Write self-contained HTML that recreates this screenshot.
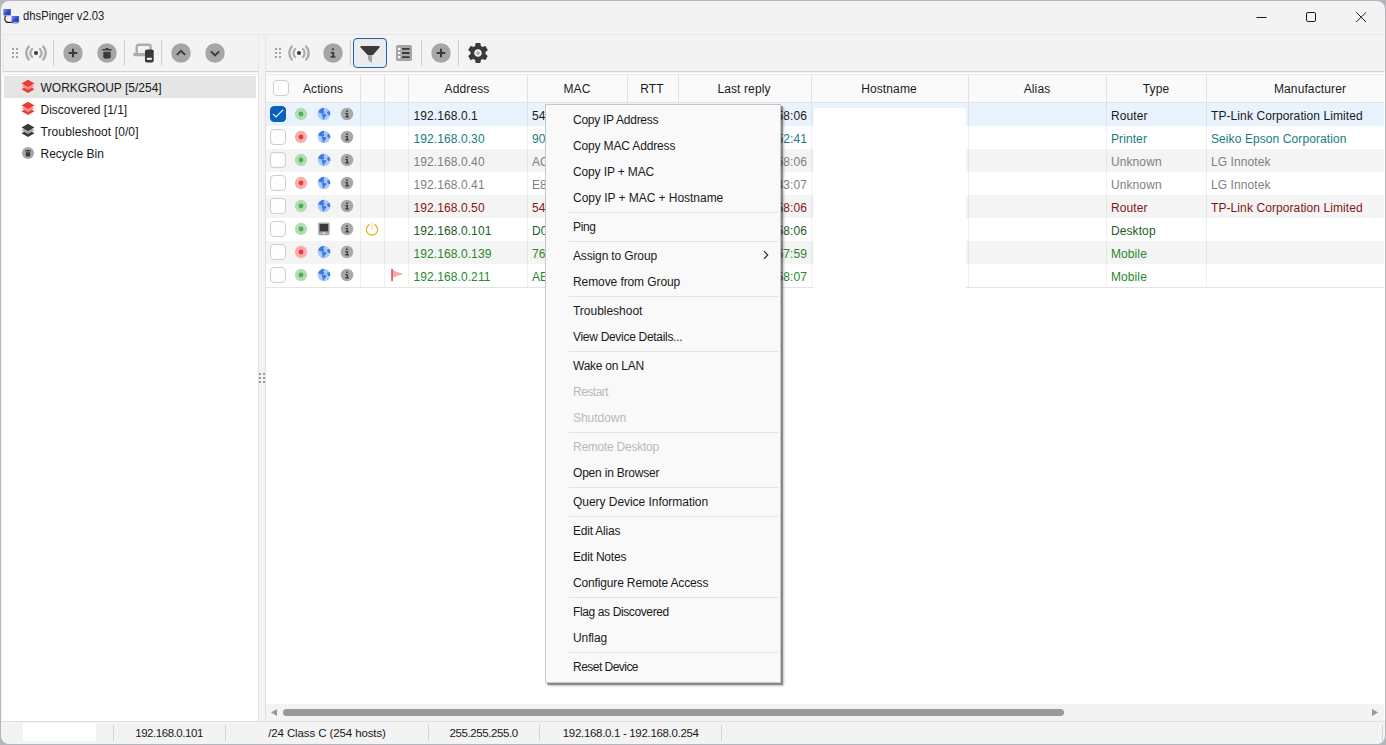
<!DOCTYPE html>
<html><head><meta charset="utf-8"><title>dhsPinger v2.03</title>
<style>
*{box-sizing:border-box;margin:0;padding:0}
html,body{width:1386px;height:745px;overflow:hidden;background:#b4b7bb}
body{font-family:"Liberation Sans",sans-serif;font-size:12px;color:#1a1a1a;position:relative}
i,b{font-style:normal;font-weight:normal;display:block}
#win{position:absolute;left:1px;top:1px;width:1384px;height:743px;background:#f3f3f3;border-radius:8px;overflow:hidden}
#title{position:absolute;left:21.600px;top:7px;font-size:12.500px;line-height:16px;color:#1a1a1a;white-space:nowrap;transform-origin:0 0;transform:scaleX(0.9000)}
.hl{position:absolute;height:1px;background:#e2e2e2}
.vl{position:absolute;width:1px;background:#d0d0d0}
.tb{position:absolute}
#tree{position:absolute;left:1px;top:72px;width:257px;height:648px;background:#fff;border-right:1px solid #e0e0e0}
.ti{position:absolute;left:2px;width:252px;height:22px;line-height:24px;padding-left:36.500px;font-size:12px;white-space:nowrap}
.ti.sel{background:#e5e5e5}
.ti svg{position:absolute;left:17px;top:4px}
#grid{position:absolute;left:264px;top:72px;width:1120px;height:648px;background:#fff}
#grid:before{content:'';position:absolute;left:0;top:0;width:1px;height:648px;background:#e0e0e0;z-index:3}
#hdr{position:absolute;left:0;top:1px;width:1119px;height:29px;background:#fafafa;border-bottom:1px solid #e4e4e4;border-top:1px solid #ebebeb}
.hs{position:absolute;top:0;width:1px;height:27px;background:#e2e2e2}
.hc{position:absolute;top:0;width:120px;height:27px;line-height:29px;text-align:center;white-space:nowrap;letter-spacing:.12px}
.row{position:absolute;left:0;width:1119px;height:23px;line-height:27px;white-space:nowrap;letter-spacing:.09px}
.row.alt{background:#f4f4f4}
.row.sel{background:#e8f3fd}
.row span{position:absolute;top:0}
.rs{position:absolute;top:0;width:1px;height:23px;background:rgba(0,0,0,.06)}
.ic{position:absolute;top:3.900px}
.cb{position:absolute;width:16px;height:16px;border:1px solid #cdcdcd;border-radius:4px;background:#fefefe}
.cb.on{background:#0860be;border-color:#0860be}
.cb svg{position:absolute;left:-1px;top:-1px}
.c-teal{color:#187c84}.c-gray{color:#7f7f7f}.c-red{color:#84161a}.c-dg{color:#1b601f}.c-g{color:#26882a}
#redact{position:absolute;left:549px;top:35px;width:152px;height:180px;background:#fff}
#menu{position:absolute;left:544px;top:103px;width:236px;height:579px;background:#f9f9f9;border:1px solid #c6c6c6;box-shadow:2px 2px 0 rgba(0,0,0,.3),3px 3px 2px rgba(0,0,0,.24);font-size:12px}
.mi{position:absolute;left:27px;width:190px;height:26px;line-height:26px;white-space:nowrap;color:#1a1a1a}
.mi.dis{color:#b9b9b9}
.mi .arr{position:absolute;left:189px;top:7px}
.ms{position:absolute;left:23px;width:209px;height:1px;background:#e1e1e1}
#status{position:absolute;left:0;top:720px;width:1384px;height:23px;font-size:11.500px;line-height:23px;border-top:1px solid #e0e0e0}
#status span{position:absolute;top:0;white-space:nowrap}
#status i{position:absolute;top:3px;width:1px;height:16px;background:#d4d4d4}
</style></head><body>
<div id="win">
<!-- title bar -->
<svg class="tb" style="left:2px;top:7px" width="18" height="18" viewBox="0 0 18 18">
<defs><linearGradient id="mg" x1="0" y1="0" x2="1" y2="1"><stop offset="0" stop-color="#7f9df5"/><stop offset=".45" stop-color="#2f4fe0"/><stop offset="1" stop-color="#1f2fc8"/></linearGradient></defs>
<path d="M3.200 7.500C1.300 8.800 1.100 12.900 3.700 14.100C4.600 14.500 7 14.500 10 14.500" fill="none" stroke="#1a1a1a" stroke-width="1.200"/>
<rect x="0.400" y="1" width="7.500" height="6.500" fill="#5a68b4"/><rect x="1.100" y="1.600" width="6.100" height="5.100" fill="url(#mg)"/><rect x="1.600" y="7.500" width="4.800" height=".9" fill="#a9b0c8"/>
<rect x="8.600" y="8" width="7.500" height="6.600" fill="#5a68b4"/><rect x="9.300" y="8.600" width="6.100" height="5.200" fill="url(#mg)"/><rect x="9.800" y="14.600" width="5" height="1.300" fill="#a9b0c8"/>
</svg>
<div id="title">dhsPinger v2.03</div>
<svg class="tb" style="left:1250px;top:5px" width="130" height="22" viewBox="0 0 130 22">
<path d="M5.5 11.5h10" stroke="#1a1a1a" stroke-width="1" fill="none"/>
<rect x="55.5" y="6.5" width="9" height="9" rx="1.3" fill="none" stroke="#1a1a1a" stroke-width="1"/>
<path d="M105.300 6.300l9.700 9.700M115 6.300l-9.700 9.700" stroke="#1a1a1a" stroke-width="1" fill="none"/>
</svg>
<!-- toolbars -->
<div class="hl" style="left:2px;top:33px;width:1381px;background:#e7e7e7"></div>
<div class="hl" style="left:2px;top:70px;width:256px;background:#d4d4d4"></div>
<div class="hl" style="left:264px;top:70px;width:1119px;background:#d4d4d4"></div>
<div class="vl" style="left:2px;top:34px;height:36px;background:#e9e9e9"></div>
<div class="vl" style="left:264px;top:34px;height:36px;background:#e6e6e6"></div>
<div class="vl" style="left:257px;top:34px;height:36px;background:#e9e9e9"></div>
<svg class="tb" style="left:10px;top:46px" width="8" height="12"><g fill="#a3a3a3"><rect x="1" y="1" width="2" height="2"/><rect x="5" y="1" width="2" height="2"/><rect x="1" y="5" width="2" height="2"/><rect x="5" y="5" width="2" height="2"/><rect x="1" y="9" width="2" height="2"/><rect x="5" y="9" width="2" height="2"/></g></svg>
<svg class="tb" style="left:22px;top:39px" width="26" height="26"><use href="#i-sens"/></svg>
<div class="vl" style="left:52px;top:39px;height:26px"></div>
<svg class="tb" style="left:62px;top:42px" width="20" height="20"><use href="#i-add"/></svg>
<svg class="tb" style="left:96px;top:42px" width="20" height="20"><use href="#i-del"/></svg>
<div class="vl" style="left:123px;top:39px;height:26px"></div>
<svg class="tb" style="left:131px;top:41px" width="23" height="22" viewBox="0 0 23 22">
<path d="M4.750 11.500V4.400c0-.9.700-1.650 1.650-1.650H16.900c.9 0 1.650.7 1.650 1.650V8" fill="none" stroke="#ababab" stroke-width="2.400"/><path d="M1.300 10.900h12.300v3.300H2.700c-.8 0-1.400-.6-1.400-1.400z" fill="#ababab"/>
<rect x="13" y="7.400" width="8.700" height="13" rx="1.900" fill="#3a3a3a"/><rect x="14.900" y="15.800" width="4.900" height="2" fill="#fff"/></svg>
<div class="vl" style="left:160px;top:39px;height:26px"></div>
<svg class="tb" style="left:170px;top:42px" width="20" height="20"><use href="#i-up"/></svg>
<svg class="tb" style="left:204px;top:42px" width="20" height="20"><use href="#i-down"/></svg>
<!-- right toolbar -->
<svg class="tb" style="left:273px;top:46px" width="8" height="12"><g fill="#a3a3a3"><rect x="1" y="1" width="2" height="2"/><rect x="5" y="1" width="2" height="2"/><rect x="1" y="5" width="2" height="2"/><rect x="5" y="5" width="2" height="2"/><rect x="1" y="9" width="2" height="2"/><rect x="5" y="9" width="2" height="2"/></g></svg>
<svg class="tb" style="left:285px;top:39px" width="26" height="26"><use href="#i-sens"/></svg>
<svg class="tb" style="left:322px;top:42px" width="20" height="20"><use href="#i-infob"/></svg>
<div class="vl" style="left:349px;top:39px;height:26px"></div>
<div class="tb" style="left:352px;top:37px;width:34px;height:30px;border:1px solid #26609b;border-radius:4px;background:#ebebeb;box-shadow:inset 0 0 0 1px #dceefa"></div>
<svg class="tb" style="left:358px;top:43px" width="22" height="20" viewBox="0 0 22 20"><path d="M9 10.500h4v8.200l-2.100-1.200c-1.100-.7-1.900-1.700-1.900-3z" fill="#a3a3a3"/><path d="M2.400 2h17.300c.9 0 1.300.9.800 1.500L14 10.900H8.600L1.600 3.500C1.100 2.900 1.500 2 2.400 2z" fill="#3a3a3a"/></svg>
<svg class="tb" style="left:395px;top:44px" width="16" height="16" viewBox="0 0 16 16"><rect width="16" height="16" rx="1.700" fill="#a5a5a5"/><g fill="#fff"><rect x="2" y="2.800" width="2.300" height="2.200" rx=".6"/><rect x="2" y="6.900" width="2.300" height="2.200" rx=".6"/><rect x="2" y="11" width="2.300" height="2.200" rx=".6"/></g><g fill="#3a3a3a"><rect x="6" y="3" width="7.700" height="1.800" rx=".5"/><rect x="6" y="7.100" width="7.700" height="1.800" rx=".5"/><rect x="6" y="11.200" width="7.700" height="1.800" rx=".5"/></g></svg>
<div class="vl" style="left:420px;top:39px;height:26px"></div>
<svg class="tb" style="left:430px;top:42px" width="20" height="20"><use href="#i-add"/></svg>
<div class="vl" style="left:457px;top:39px;height:26px"></div>
<svg class="tb" style="left:464px;top:39px" width="26" height="26"><use href="#i-gear"/></svg>
<!-- tree -->
<div id="tree">
<div class="hl" style="left:0;top:1px;width:256px;background:#ededed"></div>
<div class="ti sel" style="top:3px"><svg width="14" height="15" style="top:2.800px"><use href="#i-layr"/></svg>WORKGROUP [5/254]</div>
<div class="ti" style="top:25px"><svg width="14" height="15" style="top:2.800px"><use href="#i-layr"/></svg>Discovered [1/1]</div>
<div class="ti" style="top:47px"><svg width="14" height="15" style="top:2.800px"><use href="#i-layk"/></svg><span style="letter-spacing:.1px">Troubleshoot [0/0]</span></div>
<div class="ti" style="top:69px"><svg width="14" height="14"><use href="#i-bin"/></svg>Recycle Bin</div>
</div>
<svg class="tb" style="left:258px;top:372px" width="6" height="10"><g fill="#9c9c9c"><rect x="0" y="0" width="2" height="2"/><rect x="4" y="0" width="2" height="2"/><rect x="0" y="4" width="2" height="2"/><rect x="4" y="4" width="2" height="2"/><rect x="0" y="8" width="2" height="2"/><rect x="4" y="8" width="2" height="2"/></g></svg>
<div id="grid">
<div id="hdr">
<i class="hs" style="left:95px"></i><i class="hs" style="left:119px"></i><i class="hs" style="left:143px"></i><i class="hs" style="left:262px"></i><i class="hs" style="left:362px"></i><i class="hs" style="left:413px"></i><i class="hs" style="left:546px"></i><i class="hs" style="left:703px"></i><i class="hs" style="left:841px"></i><i class="hs" style="left:941px"></i>
<b class="cb" style="left:8px;top:5px"></b>
<span class="hc" style="left:-2px">Actions</span><span class="hc" style="left:142px">Address</span><span class="hc" style="left:252px">MAC</span><span class="hc" style="left:327px">RTT</span><span class="hc" style="left:419px">Last reply</span><span class="hc" style="left:564px">Hostname</span><span class="hc" style="left:712px">Alias</span><span class="hc" style="left:831px">Type</span><span class="hc" style="left:985px">Manufacturer</span>
</div>
<div class="row sel " style="top:30px"><i class="rs" style="left:95px"></i><i class="rs" style="left:119px"></i><i class="rs" style="left:143px"></i><i class="rs" style="left:262px"></i><i class="rs" style="left:362px"></i><i class="rs" style="left:413px"></i><i class="rs" style="left:546px"></i><i class="rs" style="left:703px"></i><i class="rs" style="left:841px"></i><i class="rs" style="left:941px"></i><b class="cb on" style="left:5px;top:3px"><svg width="16" height="16" viewBox="0 0 16 16"><path d="M3.300 8.300L6 10.900 12.800 4.100" fill="none" stroke="#fff" stroke-width="1.150" stroke-linecap="round" stroke-linejoin="round"/></svg></b><svg class="ic" style="left:29px" width="14" height="14"><use href="#i-dotg"/></svg><svg class="ic" style="left:52.200px" width="14" height="14"><use href="#i-globe"/></svg><svg class="ic" style="left:75px" width="14" height="14"><use href="#i-info"/></svg><span style="left:148.500px">192.168.0.1</span><span style="left:267px">54:AF:97:2C:1B:08</span><span style="left:367px">1 ms</span><span style="right:577px">14/03/2025 10:58:06</span><span style="left:846px">Router</span><span style="left:946px">TP-Link Corporation Limited</span></div>
<div class="row c-teal" style="top:53px"><i class="rs" style="left:95px"></i><i class="rs" style="left:119px"></i><i class="rs" style="left:143px"></i><i class="rs" style="left:262px"></i><i class="rs" style="left:362px"></i><i class="rs" style="left:413px"></i><i class="rs" style="left:546px"></i><i class="rs" style="left:703px"></i><i class="rs" style="left:841px"></i><i class="rs" style="left:941px"></i><b class="cb" style="left:5px;top:3px"></b><svg class="ic" style="left:29px" width="14" height="14"><use href="#i-dotr"/></svg><svg class="ic" style="left:52.200px" width="14" height="14"><use href="#i-globe"/></svg><svg class="ic" style="left:75px" width="14" height="14"><use href="#i-info"/></svg><span style="left:148.500px">192.168.0.30</span><span style="left:267px">90:2B:34:7D:11:C5</span><span style="left:367px"></span><span style="right:577px">14/03/2025 10:52:41</span><span style="left:846px">Printer</span><span style="left:946px">Seiko Epson Corporation</span></div>
<div class="row alt c-gray" style="top:76px"><i class="rs" style="left:95px"></i><i class="rs" style="left:119px"></i><i class="rs" style="left:143px"></i><i class="rs" style="left:262px"></i><i class="rs" style="left:362px"></i><i class="rs" style="left:413px"></i><i class="rs" style="left:546px"></i><i class="rs" style="left:703px"></i><i class="rs" style="left:841px"></i><i class="rs" style="left:941px"></i><b class="cb" style="left:5px;top:3px"></b><svg class="ic" style="left:29px" width="14" height="14"><use href="#i-dotg"/></svg><svg class="ic" style="left:52.200px" width="14" height="14"><use href="#i-globe"/></svg><svg class="ic" style="left:75px" width="14" height="14"><use href="#i-info"/></svg><span style="left:148.500px">192.168.0.40</span><span style="left:267px">AC:0D:1B:66:3E:92</span><span style="left:367px">2 ms</span><span style="right:577px">14/03/2025 10:58:06</span><span style="left:846px">Unknown</span><span style="left:946px">LG Innotek</span></div>
<div class="row c-gray" style="top:99px"><i class="rs" style="left:95px"></i><i class="rs" style="left:119px"></i><i class="rs" style="left:143px"></i><i class="rs" style="left:262px"></i><i class="rs" style="left:362px"></i><i class="rs" style="left:413px"></i><i class="rs" style="left:546px"></i><i class="rs" style="left:703px"></i><i class="rs" style="left:841px"></i><i class="rs" style="left:941px"></i><b class="cb" style="left:5px;top:3px"></b><svg class="ic" style="left:29px" width="14" height="14"><use href="#i-dotr"/></svg><svg class="ic" style="left:52.200px" width="14" height="14"><use href="#i-globe"/></svg><svg class="ic" style="left:75px" width="14" height="14"><use href="#i-info"/></svg><span style="left:148.500px">192.168.0.41</span><span style="left:267px">E8:F2:E2:A4:90:1D</span><span style="left:367px"></span><span style="right:577px">14/03/2025 10:43:07</span><span style="left:846px">Unknown</span><span style="left:946px">LG Innotek</span></div>
<div class="row alt c-red" style="top:122px"><i class="rs" style="left:95px"></i><i class="rs" style="left:119px"></i><i class="rs" style="left:143px"></i><i class="rs" style="left:262px"></i><i class="rs" style="left:362px"></i><i class="rs" style="left:413px"></i><i class="rs" style="left:546px"></i><i class="rs" style="left:703px"></i><i class="rs" style="left:841px"></i><i class="rs" style="left:941px"></i><b class="cb" style="left:5px;top:3px"></b><svg class="ic" style="left:29px" width="14" height="14"><use href="#i-dotg"/></svg><svg class="ic" style="left:52.200px" width="14" height="14"><use href="#i-globe"/></svg><svg class="ic" style="left:75px" width="14" height="14"><use href="#i-info"/></svg><span style="left:148.500px">192.168.0.50</span><span style="left:267px">54:AF:97:2C:4A:E1</span><span style="left:367px">1 ms</span><span style="right:577px">14/03/2025 10:58:06</span><span style="left:846px">Router</span><span style="left:946px">TP-Link Corporation Limited</span></div>
<div class="row c-dg" style="top:145px"><i class="rs" style="left:95px"></i><i class="rs" style="left:119px"></i><i class="rs" style="left:143px"></i><i class="rs" style="left:262px"></i><i class="rs" style="left:362px"></i><i class="rs" style="left:413px"></i><i class="rs" style="left:546px"></i><i class="rs" style="left:703px"></i><i class="rs" style="left:841px"></i><i class="rs" style="left:941px"></i><b class="cb" style="left:5px;top:3px"></b><svg class="ic" style="left:29px" width="14" height="14"><use href="#i-dotg"/></svg><svg class="ic s" style="left:52px" width="14" height="14"><use href="#i-pc"/></svg><svg class="ic" style="left:75px" width="14" height="14"><use href="#i-info"/></svg><svg class="ic s" style="left:100px" width="14" height="14"><use href="#i-power"/></svg><span style="left:148.500px">192.168.0.101</span><span style="left:267px">D0:50:99:8A:C2:37</span><span style="left:367px">0 ms</span><span style="right:577px">14/03/2025 10:58:06</span><span style="left:846px">Desktop</span></div>
<div class="row alt c-g" style="top:168px"><i class="rs" style="left:95px"></i><i class="rs" style="left:119px"></i><i class="rs" style="left:143px"></i><i class="rs" style="left:262px"></i><i class="rs" style="left:362px"></i><i class="rs" style="left:413px"></i><i class="rs" style="left:546px"></i><i class="rs" style="left:703px"></i><i class="rs" style="left:841px"></i><i class="rs" style="left:941px"></i><b class="cb" style="left:5px;top:3px"></b><svg class="ic" style="left:29px" width="14" height="14"><use href="#i-dotr"/></svg><svg class="ic" style="left:52.200px" width="14" height="14"><use href="#i-globe"/></svg><svg class="ic" style="left:75px" width="14" height="14"><use href="#i-info"/></svg><span style="left:148.500px">192.168.0.139</span><span style="left:267px">76:3B:D1:0F:5A:6C</span><span style="left:367px"></span><span style="right:577px">14/03/2025 10:57:59</span><span style="left:846px">Mobile</span></div>
<div class="row c-g" style="top:191px"><i class="rs" style="left:95px"></i><i class="rs" style="left:119px"></i><i class="rs" style="left:143px"></i><i class="rs" style="left:262px"></i><i class="rs" style="left:362px"></i><i class="rs" style="left:413px"></i><i class="rs" style="left:546px"></i><i class="rs" style="left:703px"></i><i class="rs" style="left:841px"></i><i class="rs" style="left:941px"></i><b class="cb" style="left:5px;top:3px"></b><svg class="ic" style="left:29px" width="14" height="14"><use href="#i-dotg"/></svg><svg class="ic" style="left:52.200px" width="14" height="14"><use href="#i-globe"/></svg><svg class="ic" style="left:75px" width="14" height="14"><use href="#i-info"/></svg><svg class="ic s" style="left:125px" width="14" height="14"><use href="#i-flag"/></svg><span style="left:148.500px">192.168.0.211</span><span style="left:267px">AE:19:42:B7:E0:53</span><span style="left:367px">5 ms</span><span style="right:577px">14/03/2025 10:58:07</span><span style="left:846px">Mobile</span></div>
<div class="hl" style="left:0;top:214px;width:1119px;background:#e4e4e4"></div>
<div id="redact"></div>
<div style="position:absolute;left:0;top:631px;width:1119px;height:17px;background:#f3f3f3">
<svg style="position:absolute;left:6px;top:5px" width="8" height="8"><path d="M6 0v7L0 3.500z" fill="#979797"/></svg>
<b style="position:absolute;left:18px;top:5px;width:781px;height:7px;border-radius:3.500px;background:#999"></b>
<svg style="position:absolute;left:1107px;top:5px" width="8" height="8"><path d="M0 0v7l6-3.500z" fill="#979797"/></svg>
</div>
</div>
<!-- status -->
<div id="status">
<b style="position:absolute;left:22px;top:1px;width:73px;height:18px;background:#fff"></b>
<i style="left:112px"></i><i style="left:224px"></i><i style="left:427px"></i><i style="left:538px"></i><i style="left:720px"></i><i style="left:1381px"></i>
<span style="left:134.2px;letter-spacing:-0.45px">192.168.0.101</span>
<span style="left:267.2px;letter-spacing:-0.11px">/24 Class C (254 hosts)</span>
<span style="left:448.4px;letter-spacing:-0.39px">255.255.255.0</span>
<span style="left:561.8px;letter-spacing:-0.32px">192.168.0.1 - 192.168.0.254</span>
</div>
<div id="menu">
<div class="mi" style="top:2px;letter-spacing:-0.26px">Copy IP Address</div>
<div class="mi" style="top:28px;letter-spacing:-0.15px">Copy MAC Address</div>
<div class="mi" style="top:54px;letter-spacing:-0.13px">Copy IP + MAC</div>
<div class="mi" style="top:80px;letter-spacing:-0.04px">Copy IP + MAC + Hostname</div>
<i class="ms" style="top:107px"></i>
<div class="mi" style="top:109px;letter-spacing:-0.37px">Ping</div>
<i class="ms" style="top:136px"></i>
<div class="mi" style="top:138px;letter-spacing:-0.14px">Assign to Group<svg class="arr" width="8" height="10" viewBox="0 0 8 10"><path d="M2 1.2 L5.8 5 L2 8.8" fill="none" stroke="#222" stroke-width="1.1"/></svg></div>
<div class="mi" style="top:164px;letter-spacing:-0.09px">Remove from Group</div>
<i class="ms" style="top:191px"></i>
<div class="mi" style="top:193px;letter-spacing:-0.02px">Troubleshoot</div>
<div class="mi" style="top:219px;letter-spacing:-0.30px">View Device Details...</div>
<i class="ms" style="top:246px"></i>
<div class="mi" style="top:248px;letter-spacing:-0.25px">Wake on LAN</div>
<div class="mi dis" style="top:274px;letter-spacing:-0.51px">Restart</div>
<div class="mi dis" style="top:300px;letter-spacing:-0.04px">Shutdown</div>
<i class="ms" style="top:327px"></i>
<div class="mi dis" style="top:329px;letter-spacing:-0.25px">Remote Desktop</div>
<div class="mi" style="top:355px;letter-spacing:-0.20px">Open in Browser</div>
<i class="ms" style="top:382px"></i>
<div class="mi" style="top:384px;letter-spacing:-0.04px">Query Device Information</div>
<i class="ms" style="top:411px"></i>
<div class="mi" style="top:413px;letter-spacing:-0.21px">Edit Alias</div>
<div class="mi" style="top:439px;letter-spacing:-0.22px">Edit Notes</div>
<div class="mi" style="top:465px;letter-spacing:-0.15px">Configure Remote Access</div>
<i class="ms" style="top:492px"></i>
<div class="mi" style="top:494px;letter-spacing:-0.38px">Flag as Discovered</div>
<div class="mi" style="top:520px;letter-spacing:-0.10px">Unflag</div>
<i class="ms" style="top:547px"></i>
<div class="mi" style="top:549px;letter-spacing:-0.53px">Reset Device</div>
</div>
</div>
<svg width="0" height="0" style="position:absolute;left:-10px;top:-10px"><defs>
<symbol id="i-dotg" viewBox="0 0 14 14"><circle cx="7" cy="7" r="6.150" fill="#b3dcb4"/><circle cx="7" cy="7" r="2.450" fill="#4caf50"/></symbol>
<symbol id="i-dotr" viewBox="0 0 14 14"><circle cx="7" cy="7" r="6.150" fill="#f6adac"/><circle cx="7" cy="7" r="2.450" fill="#ea3b3b"/></symbol>
<symbol id="i-globe" viewBox="0 0 14 14"><circle cx="7" cy="7" r="6.250" fill="#a9c8fa"/><g fill="#3b7be6"><path d="M1.100 5.600C1.400 3.800 2.600 2.200 4.300 1.400C5 1 5.800.800 6.600.800C7.200 1.400 7.100 2.300 6.700 3C6.300 3.700 6.700 4.300 7.300 4.900C7.400 5.700 6.500 6.600 5.600 6.700C4.700 6.700 3.900 6.600 3.300 6.100C2.600 5.500 1.800 5.300 1.100 5.600Z"/><path d="M4.900 7.300C5.700 6.900 6.800 6.900 7.700 7.100C8.500 7.200 9.200 7.500 9.400 8C9.300 8.900 8.700 9.500 8 10C7.300 10.500 7.100 11.300 6.900 12.200C6.700 12.700 6.100 12.500 5.900 12C5.600 11.300 5.800 10.400 5.600 9.700C5.300 9 4.500 8.300 4.900 7.300Z"/><path d="M10.300 4.700C10.900 4.200 11.600 3.900 12.300 4C12.900 4.900 13.250 5.900 13.250 7C13.250 7.300 13.200 7.600 13.150 7.900C12.500 8.200 11.700 8.100 11.100 7.500C10.500 6.900 9.900 5.700 10.300 4.700Z"/></g></symbol>
<symbol id="i-info" viewBox="0 0 14 14"><circle cx="7" cy="7" r="6.250" fill="#a8a8a8"/><path fill="#3a3a3a" d="M6.100 3.400h1.700v1.500H6.100zM5.300 5.900h2.600v3.400h1v1.100H5.200V9.300h1.300V7H5.300z"/></symbol>
<symbol id="i-pc" viewBox="0 0 14 14"><rect x="1.2" y="0.6" width="11.4" height="12.6" rx="1.4" fill="#a8a8a8"/><rect x="2.6" y="2" width="8.6" height="7.4" fill="#3c3c3c"/><rect x="5.9" y="10.6" width="2.2" height="1.1" fill="#fff"/></symbol>
<symbol id="i-power" viewBox="0 0 14 14"><path d="M4.3 2.6A5.6 5.6 0 1 0 9.7 2.6" fill="none" stroke="#e4b322" stroke-width="1.25" stroke-linecap="round"/><path d="M7 0.2v7.2" stroke="#f3dcc2" stroke-width="1.3" fill="none"/></symbol>
<symbol id="i-flag" viewBox="0 0 14 14"><path d="M2.700 2.300L13.200 5.900 2.700 9.500z" fill="#f5a8a8"/><rect x="1.2" y="0.9" width="1.7" height="12.3" fill="#cf5a5c"/></symbol>
<symbol id="i-layr" viewBox="0 0 14 15"><path d="M7 6.60L13.500 10.30 7 14.00 0.500 10.30z" fill="#ee3a35"/><path d="M7 3.65L13.500 7.35 7 11.05 0.500 7.35z" fill="#f5938f"/><path d="M7 0.70L13.500 4.40 7 8.10 0.500 4.40z" fill="#ee3a35"/></symbol>
<symbol id="i-layk" viewBox="0 0 14 15"><path d="M7 6.60L13.500 10.30 7 14.00 0.500 10.30z" fill="#3a3a3a"/><path d="M7 3.65L13.500 7.35 7 11.05 0.500 7.35z" fill="#a9a9a9"/><path d="M7 0.70L13.500 4.40 7 8.10 0.500 4.40z" fill="#3a3a3a"/></symbol>
<symbol id="i-bin" viewBox="0 0 14 14"><circle cx="7" cy="7" r="6.100" fill="#a8a8a8"/><path fill="#3a3a3a" d="M4.700 6.200h4.600v3.300c0 .5-.4.900-.9.900H5.600c-.5 0-.9-.4-.9-.900zM4.100 4.300h1.900l.4-.6h1.200l.4.600h1.900v1.200H4.100z"/></symbol>
<symbol id="i-sens" viewBox="0 0 26 26"><g fill="none" stroke="#acacac" stroke-linecap="round"><path stroke-width="2.450" d="M5.79 6.51A9.70 9.70 0 0 0 5.79 19.49M20.21 6.51A9.70 9.70 0 0 1 20.21 19.49"/><path stroke-width="2.300" d="M9.11 8.97A5.60 5.60 0 0 0 9.11 17.03M16.89 8.97A5.60 5.60 0 0 1 16.89 17.03"/></g><circle cx="13" cy="13" r="2.050" fill="#3a3a3a"/></symbol>
<symbol id="i-add" viewBox="0 0 20 20"><circle cx="10" cy="10" r="9.750" fill="#a6a6a6"/><path fill="#3a3a3a" d="M9 5.700h2V9h3.300v2H11v3.300H9V11H5.700V9H9z"/></symbol>
<symbol id="i-del" viewBox="0 0 20 20"><circle cx="10" cy="10" r="9.750" fill="#a6a6a6"/><path fill="#3a3a3a" d="M6.300 8.700h7.400v5.300c0 .8-.6 1.400-1.400 1.400H7.700c-.8 0-1.400-.6-1.400-1.400zM5.400 5.900h2.800l.7-.9h2.200l.7.900h2.800v1.700H5.400z"/></symbol>
<symbol id="i-up" viewBox="0 0 20 20"><circle cx="10" cy="10" r="9.750" fill="#a6a6a6"/><path d="M5.900 11.900L10 7.800l4.100 4.100" fill="none" stroke="#3a3a3a" stroke-width="1.900"/></symbol>
<symbol id="i-down" viewBox="0 0 20 20"><circle cx="10" cy="10" r="9.750" fill="#a6a6a6"/><path d="M5.900 8.400L10 12.500l4.100-4.100" fill="none" stroke="#3a3a3a" stroke-width="1.900"/></symbol>
<symbol id="i-infob" viewBox="0 0 20 20"><circle cx="10" cy="10" r="9.750" fill="#a6a6a6"/><circle cx="9.900" cy="6.300" r="1.150" fill="#3a3a3a"/><path fill="#3a3a3a" d="M7.700 9.100h3.500v4.100h1.200v1.600H7.400v-1.600h2V10.600H7.700z"/></symbol>
<symbol id="i-gear" viewBox="-0.480 -0.480 24.960 24.960"><circle cx="12" cy="12" r="4.200" fill="#f6f6f6"/><circle cx="12" cy="12" r="1.800" fill="#a9a9a9"/><path fill="#3a3a3a" d="M19.140 12.940c.04-.3.06-.61.060-.94 0-.32-.02-.64-.07-.94l2.030-1.580c.18-.14.23-.41.120-.61l-1.920-3.320c-.12-.22-.37-.29-.59-.22l-2.390.96c-.5-.38-1.030-.7-1.620-.94l-.36-2.540c-.04-.24-.24-.41-.48-.41h-3.840c-.24 0-.43.170-.47.410l-.36 2.540c-.59.240-1.130.570-1.620.940l-2.390-.96c-.22-.08-.47 0-.59.220L2.740 8.870c-.12.210-.08.470.12.610l2.030 1.580c-.05.300-.09.630-.09.940s.02.640.07.940l-2.030 1.580c-.18.140-.23.410-.12.610l1.920 3.320c.12.220.37.290.59.220l2.390-.96c.5.380 1.030.700 1.620.940l.36 2.540c.05.240.24.410.48.410h3.840c.24 0 .44-.17.470-.41l.36-2.540c.59-.24 1.130-.56 1.620-.94l2.390.96c.22.080.47 0 .59-.22l1.920-3.320c.12-.22.070-.47-.12-.61l-2.010-1.580zM12 15.600c-1.980 0-3.600-1.620-3.600-3.600s1.620-3.600 3.600-3.600 3.600 1.620 3.600 3.600-1.620 3.600-3.600 3.600z"/></symbol>
</defs></svg>
</body></html>
